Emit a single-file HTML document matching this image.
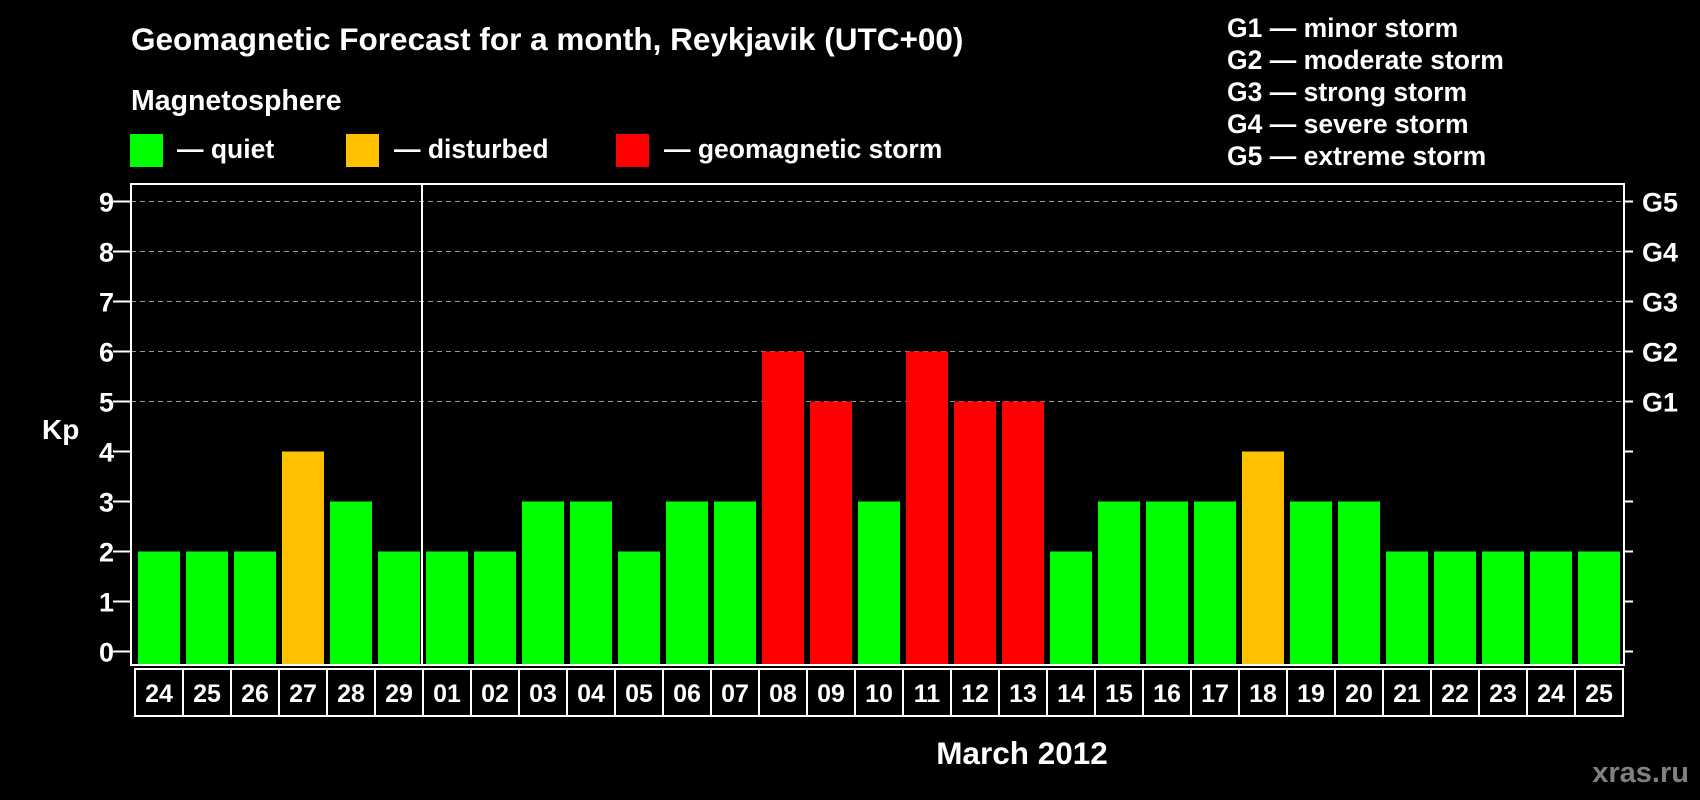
<!DOCTYPE html>
<html><head><meta charset="utf-8"><style>
html,body{margin:0;padding:0;background:#000;}
svg{display:block;}
text{font-family:"Liberation Sans",Arial,sans-serif;font-weight:bold;fill:#fff;}
</style></head><body>
<svg width="1700" height="800" viewBox="0 0 1700 800" xmlns="http://www.w3.org/2000/svg">
<rect width="1700" height="800" fill="#000"/>
<text x="131" y="50" font-size="31.5">Geomagnetic Forecast for a month, Reykjavik (UTC+00)</text>
<text x="131" y="110" font-size="28.5">Magnetosphere</text>
<rect x="130" y="134" width="33" height="33" fill="#00ff00"/>
<text x="177" y="158" font-size="26.5">— quiet</text>
<rect x="346" y="134" width="33" height="33" fill="#ffc000"/>
<text x="394" y="158" font-size="26.5">— disturbed</text>
<rect x="616" y="134" width="33" height="33" fill="#ff0000"/>
<text x="664" y="158" font-size="26.5">— geomagnetic storm</text>
<g font-size="26.5">
<text x="1227" y="37">G1 — minor storm</text>
<text x="1227" y="69">G2 — moderate storm</text>
<text x="1227" y="101">G3 — strong storm</text>
<text x="1227" y="133">G4 — severe storm</text>
<text x="1227" y="165">G5 — extreme storm</text>
</g>
<g stroke="#999" stroke-width="1" stroke-dasharray="5,4">
<line x1="131" y1="201.5" x2="1624" y2="201.5"/>
<line x1="131" y1="251.5" x2="1624" y2="251.5"/>
<line x1="131" y1="301.5" x2="1624" y2="301.5"/>
<line x1="131" y1="351.5" x2="1624" y2="351.5"/>
<line x1="131" y1="401.5" x2="1624" y2="401.5"/>
</g>
<g id="bars"></g>
<g stroke="#fff" stroke-width="2" fill="none">
<rect x="131" y="184" width="1493" height="481"/>
<line x1="422" y1="184" x2="422" y2="665"/>
</g>
<g id="ticks" stroke="#fff" stroke-width="2"></g>
<g id="ylab" font-size="27" text-anchor="end"></g>
<g id="glab" font-size="27"></g>
<text x="42" y="439" font-size="28">Kp</text>
<g id="dates" font-size="25" text-anchor="middle"></g>
<text x="1022" y="764" font-size="31.5" text-anchor="middle">March 2012</text>
<text x="1689" y="782" font-size="29" text-anchor="end" style="fill:#808080">xras.ru</text>
</svg>
<script>
(function(){
var ns="http://www.w3.org/2000/svg";
function el(p,t,a,tx){var e=document.createElementNS(ns,t);for(var k in a)e.setAttribute(k,a[k]);if(tx!=null)e.textContent=tx;document.getElementById(p).appendChild(e);}
var v=[2,2,2,4,3,2,2,2,3,3,2,3,3,6,5,3,6,5,5,2,3,3,3,4,3,3,2,2,2,2,2];
var d=["24","25","26","27","28","29","01","02","03","04","05","06","07","08","09","10","11","12","13","14","15","16","17","18","19","20","21","22","23","24","25"];
for(var i=0;i<31;i++){
 var c=v[i]>=5?"#ff0000":(v[i]==4?"#ffc000":"#00ff00");
 var yt=651.5-50*v[i];
 el("bars","rect",{x:138+48*i,y:yt,width:42,height:665-yt,fill:c});
 el("dates","rect",{x:135+48*i,y:669,width:48,height:47,fill:"none",stroke:"#fff","stroke-width":2});
 el("dates","text",{x:159+48*i,y:702},d[i]);
}
var g=["","","","","","G1","G2","G3","G4","G5"];
for(var k=0;k<=9;k++){
 var y=651.5-50*k;
 el("ticks","line",{x1:113,y1:y,x2:131,y2:y});
 el("ticks","line",{x1:1624,y1:y,x2:1633,y2:y});
 el("ylab","text",{x:114,y:y+10},String(k));
 if(g[k])el("glab","text",{x:1642,y:y+10},g[k]);
}
})();
</script>
</body></html>
